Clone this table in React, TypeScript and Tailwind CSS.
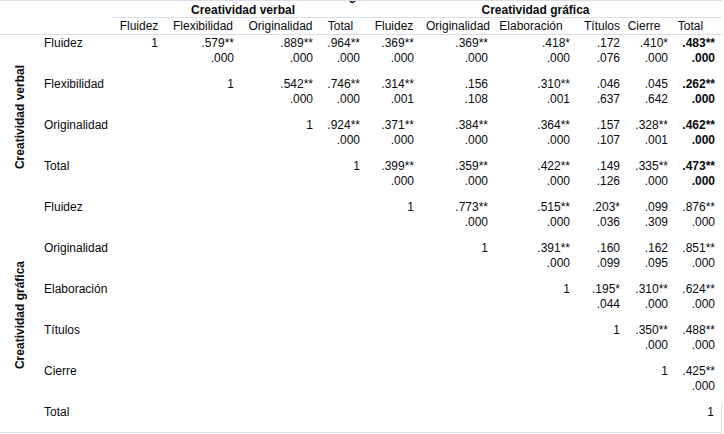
import React from "react";

type Cell = null | { v: string; s?: string; bold?: boolean };

const cols =
  "grid grid-cols-[40px_73px_52px_76px_79px_47px_54px_74px_82px_50px_48px_47px]";

const heads = [
  "Fluidez",
  "Flexibilidad",
  "Originalidad",
  "Total",
  "Fluidez",
  "Originalidad",
  "Elaboración",
  "Títulos",
  "Cierre",
  "Total",
];

// small nudges so the header labels sit where the source puts them
const headPad = [
  "",
  "",
  "",
  "pr-[6px]",
  "",
  "",
  "pr-[10px]",
  "",
  "pr-[14px]",
  "pr-[16px]",
];

const c = (v: string, s?: string, bold?: boolean): Cell => ({ v, s, bold });
const one: Cell = { v: "1" };

const rows: { label: string; cells: Cell[] }[] = [
  {
    label: "Fluidez",
    cells: [
      one,
      c(".579**", ".000"),
      c(".889**", ".000"),
      c(".964**", ".000"),
      c(".369**", ".000"),
      c(".369**", ".000"),
      c(".418*", ".000"),
      c(".172", ".076"),
      c(".410*", ".000"),
      c(".483**", ".000", true),
    ],
  },
  {
    label: "Flexibilidad",
    cells: [
      null,
      one,
      c(".542**", ".000"),
      c(".746**", ".000"),
      c(".314**", ".001"),
      c(".156", ".108"),
      c(".310**", ".001"),
      c(".046", ".637"),
      c(".045", ".642"),
      c(".262**", ".000", true),
    ],
  },
  {
    label: "Originalidad",
    cells: [
      null,
      null,
      one,
      c(".924**", ".000"),
      c(".371**", ".000"),
      c(".384**", ".000"),
      c(".364**", ".000"),
      c(".157", ".107"),
      c(".328**", ".001"),
      c(".462**", ".000", true),
    ],
  },
  {
    label: "Total",
    cells: [
      null,
      null,
      null,
      one,
      c(".399**", ".000"),
      c(".359**", ".000"),
      c(".422**", ".000"),
      c(".149", ".126"),
      c(".335**", ".000"),
      c(".473**", ".000", true),
    ],
  },
  {
    label: "Fluidez",
    cells: [
      null,
      null,
      null,
      null,
      one,
      c(".773**", ".000"),
      c(".515**", ".000"),
      c(".203*", ".036"),
      c(".099", ".309"),
      c(".876**", ".000"),
    ],
  },
  {
    label: "Originalidad",
    cells: [
      null,
      null,
      null,
      null,
      null,
      one,
      c(".391**", ".000"),
      c(".160", ".099"),
      c(".162", ".095"),
      c(".851**", ".000"),
    ],
  },
  {
    label: "Elaboración",
    cells: [
      null,
      null,
      null,
      null,
      null,
      null,
      one,
      c(".195*", ".044"),
      c(".310**", ".000"),
      c(".624**", ".000"),
    ],
  },
  {
    label: "Títulos",
    cells: [
      null,
      null,
      null,
      null,
      null,
      null,
      null,
      one,
      c(".350**", ".000"),
      c(".488**", ".000"),
    ],
  },
  {
    label: "Cierre",
    cells: [
      null,
      null,
      null,
      null,
      null,
      null,
      null,
      null,
      one,
      c(".425**", ".000"),
    ],
  },
  {
    label: "Total",
    cells: [null, null, null, null, null, null, null, null, null, one],
  },
];

function Row({ label, cells, last }: { label: string; cells: Cell[]; last?: boolean }) {
  return (
    <div
      className={`grid grid-cols-[73px_52px_76px_79px_47px_54px_74px_82px_50px_48px_47px] pt-px ${
        last ? "h-[28px]" : "h-[41px]"
      }`}
    >
      <div className="pl-[4px]">{label}</div>
      {cells.map((cell, i) => (
        <div
          key={i}
          className={`text-right pr-[7px] ${cell?.bold ? "font-bold" : ""} ${
            last && i === cells.length - 1 ? "border-r border-[#d9e0ea] -mt-px" : ""
          }`}
        >
          {cell && (
            <>
              <div className={last && i === cells.length - 1 ? "pt-px" : ""}>{cell.v}</div>
              {cell.s && <div>{cell.s}</div>}
            </>
          )}
        </div>
      ))}
    </div>
  );
}

export default function App() {
  return (
    <div className="w-[724px] h-[434px] bg-white overflow-hidden font-['Liberation_Sans',Arial,sans-serif] text-[12px] leading-[15px] text-[#0a0a0f]">
      <div className="w-[722px] border-t border-[#d9e0ea]">
        {/* clipped figure caption */}
        <div className="h-[2px] overflow-hidden">
          <div className="pl-[338px] -mt-[12px] font-bold leading-[14px]">Figura.</div>
        </div>

        {/* group headings */}
        <div className={`${cols} h-[15px]`}>
          <div className="col-start-3 col-span-4 text-center font-bold border-b border-[#d9e0ea] leading-[14px] pl-[6px]">
            Creatividad verbal
          </div>
          <div className="col-span-6 text-center font-bold border-b border-[#d9e0ea] leading-[14px] pr-[18px]">
            Creatividad gráfica
          </div>
        </div>

        {/* column headings */}
        <div className={`${cols} h-[17px] border-b border-[#d9e0ea] pt-px`}>
          <div className="col-span-2" />
          {heads.map((h, i) => (
            <div key={i} className={`text-center whitespace-nowrap ${headPad[i]}`}>
              {h}
            </div>
          ))}
        </div>

        {/* body */}
        <div className="flex border-b border-[#d9e0ea]">
          <div className="w-[40px] flex flex-col">
            <div className="h-[164px] flex items-center justify-center">
              <span className="[writing-mode:vertical-rl] rotate-180 font-bold whitespace-nowrap">
                Creatividad verbal
              </span>
            </div>
            <div className="h-[233px] flex items-center justify-center">
              <span className="[writing-mode:vertical-rl] rotate-180 font-bold whitespace-nowrap">
                Creatividad gráfica
              </span>
            </div>
          </div>
          <div className="flex-1">
            {rows.map((r, i) => (
              <Row key={i} label={r.label} cells={r.cells} last={i === rows.length - 1} />
            ))}
          </div>
        </div>
      </div>
    </div>
  );
}
